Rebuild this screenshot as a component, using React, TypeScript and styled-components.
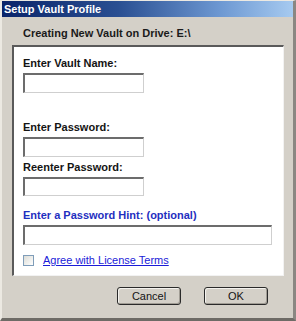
import styled, { createGlobalStyle } from "styled-components";

const GlobalStyle = createGlobalStyle`
  html, body {
    margin: 0;
    padding: 0;
    background: #d4d0c8;
  }
  * { box-sizing: border-box; }
`;

const Frame = styled.div`
  width: 296px;
  height: 321px;
  background: #d4d0c8;
  font-family: "Liberation Sans", Arial, sans-serif;
  font-size: 11px;
  color: #141414;
  border-left: 2px solid #ece9e2;
  border-top: 1px solid #ece9e2;
  border-right: 3px solid #8a8782;
  border-bottom: 3px solid #6e6b66;
  display: flex;
  flex-direction: column;
`;

const TitleBar = styled.div`
  height: 16px;
  background: linear-gradient(to right, #0a246a 0%, #2a4f92 40%, #6d98d2 75%, #a6caf0 100%);
  color: #fff;
  font-weight: bold;
  font-size: 11px;
  line-height: 16px;
  padding-left: 2px;
`;

const Heading = styled.div`
  font-weight: bold;
  line-height: 13px;
  margin: 10px 0 0 21px;
  color: #1a1a1a;
`;

const Panel = styled.div`
  margin: 5px 9px 0 10px;
  height: 231px;
  background: #fff;
  border-top: 2px solid #5a5a5a;
  border-left: 2px solid #5a5a5a;
  border-right: 1px solid #f2f2f2;
  border-bottom: 1px solid #f2f2f2;
  padding: 10px 0 0 9px;
  display: flex;
  flex-direction: column;
`;

const Label = styled.div<{ $gap: number; $blue?: boolean }>`
  font-weight: bold;
  line-height: 13px;
  margin-top: ${(p) => p.$gap}px;
  color: ${(p) => (p.$blue ? "#1f2fc0" : "#141414")};
`;

const Field = styled.div<{ $width: number; $height?: number }>`
  width: ${(p) => p.$width}px;
  height: ${(p) => p.$height ?? 20}px;
  margin-top: 3px;
  background: #fff;
  border-top: 2px solid #6c6c6c;
  border-left: 2px solid #6c6c6c;
  border-right: 1px solid #cfcfcf;
  border-bottom: 1px solid #cfcfcf;
`;

const CheckRow = styled.div`
  display: flex;
  align-items: center;
  gap: 9px;
  margin-top: 9px;
  line-height: 13px;
`;

const Box = styled.div`
  width: 11px;
  height: 11px;
  border: 1px solid #7f9db9;
  background: linear-gradient(135deg, #dcdcd6, #fff);
`;

const LinkText = styled.span`
  color: #1b1bd8;
  text-decoration: underline;
`;

const Footer = styled.div`
  display: flex;
  justify-content: flex-end;
  gap: 23px;
  padding: 11px 25px 0 0;
`;

const Button = styled.div`
  width: 64px;
  height: 18px;
  border: 1px solid #2a2a2a;
  border-radius: 3px;
  background: #d4d0c8;
  box-shadow: inset 1px 1px 0 #f4f2ee, inset -1px -1px 0 #a09c94;
  line-height: 16px;
  text-align: center;
  color: #141414;
`;

export default function App() {
  return (
    <>
      <GlobalStyle />
      <Frame>
        <TitleBar>Setup Vault Profile</TitleBar>
        <Heading>Creating New Vault on Drive: E:\</Heading>
        <Panel>
          <Label $gap={0}>Enter Vault Name:</Label>
          <Field $width={121} />
          <Label $gap={28}>Enter Password:</Label>
          <Field $width={121} />
          <Label $gap={4}>Reenter Password:</Label>
          <Field $width={121} $height={19} />
          <Label $gap={13} $blue>Enter a Password Hint: (optional)</Label>
          <Field $width={249} />
          <CheckRow>
            <Box />
            <LinkText>Agree with License Terms</LinkText>
          </CheckRow>
        </Panel>
        <Footer>
          <Button>Cancel</Button>
          <Button>OK</Button>
        </Footer>
      </Frame>
    </>
  );
}
